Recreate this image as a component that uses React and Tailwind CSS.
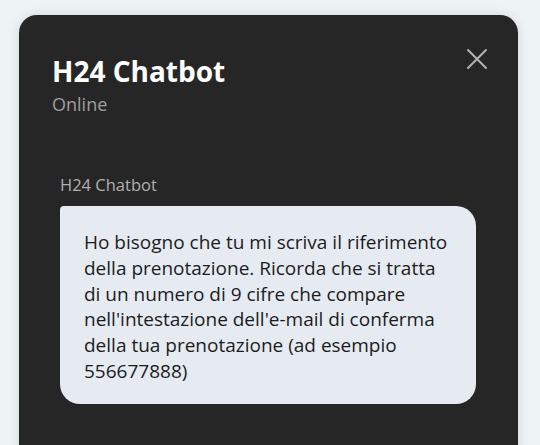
import React from 'react';

const lines = [
  'Ho bisogno che tu mi scriva il riferimento',
  'della prenotazione. Ricorda che si tratta',
  'di un numero di 9 cifre che compare',
  "nell'intestazione dell'e-mail di conferma",
  'della tua prenotazione (ad esempio',
  '556677888)',
];

const App = () => {
  return (
    <div
      className="w-[540px] h-[445px] overflow-hidden bg-[#eef3f6] pt-[15px] pl-[19px]"
      style={{ fontFamily: '"Open Sans", "Noto Sans", sans-serif' }}
    >
      <div className="w-[499px] h-[460px] rounded-[18px] bg-[#262626] shadow-[0_0_12px_rgba(0,0,0,0.12)]">
        <div className="flex items-start justify-between pl-[33px] pr-[30px] pt-[38px]">
          <div>
            <h1 className="text-[28px] leading-[36px] font-bold text-white">H24 Chatbot</h1>
            <p className="mt-[3px] text-[18px] leading-[24px] text-[#9e9e9e]">Online</p>
          </div>
          <button className="mt-[-5px] h-[22px] w-[22px] text-[#b3b3b3]" aria-label="Chiudi">
            <svg width="22" height="22" viewBox="0 0 22 22" fill="none" stroke="currentColor" strokeWidth="2" strokeLinecap="round">
              <path d="M2 2L20 20M20 2L2 20" />
            </svg>
          </button>
        </div>
        <div className="pl-[41px] pt-[58px]">
          <div className="text-[16.5px] leading-[22px] text-[#b0b0b0]">H24 Chatbot</div>
          <div className="mt-[10px] w-[416px] rounded-[20px] rounded-tl-[4px] bg-[#e6ebf2] pl-[24px] pr-[10px] pt-[24px] pb-[19px] text-[19px] leading-[25.8px] text-[#1c1c1c]">
            {lines.map((l, i) => (
              <div key={i} className="whitespace-nowrap">{l}</div>
            ))}
          </div>
        </div>
      </div>
    </div>
  );
};

export default App;
